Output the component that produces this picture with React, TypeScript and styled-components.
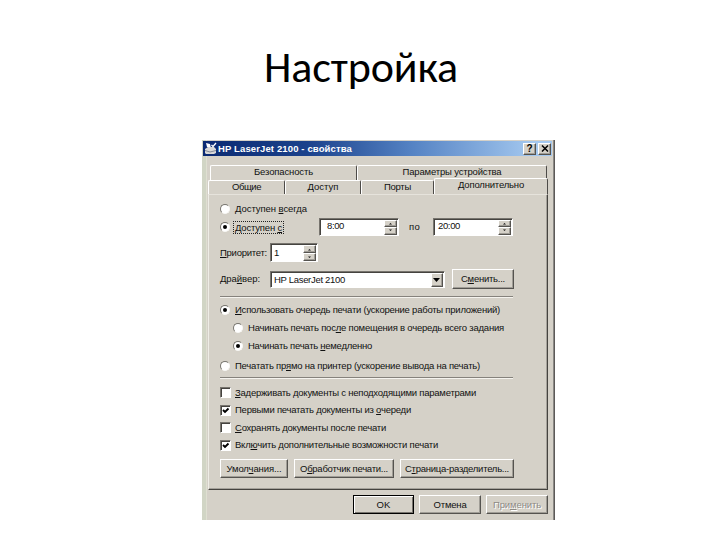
import React, { useLayoutEffect, useRef, useState } from "react"
import styled, { createGlobalStyle, css } from "styled-components"

const GlobalStyle = createGlobalStyle`
  * {
    box-sizing: border-box;
  }

  body {
    margin: 0;
    background: #fff;
    overflow: hidden;
  }
`

const raised = css`
  border: 1px solid;
  border-color: #fff #55534f #55534f #fff;
  box-shadow: inset -1px -1px 0 #a09d96;
`

const sunken = css`
  border: 1px solid;
  border-color: #77746e #fff #fff #77746e;
  box-shadow: inset 1px 1px 0 #45433f;
`

const Slide = styled.main`
  width: 720px;
  height: 540px;
  padding-top: 37px;
  background: #fff;
`

const Heading = styled.h1`
  display: flex;
  justify-content: center;
  height: 103px;
  margin: 0;
  padding-left: 2px;
  font: 400 44px/60px Carlito, "Open Sans", "Noto Sans", sans-serif;
  color: #000;
`

const Dialog = styled.section`
  width: 353px;
  height: 380px;
  margin-left: 202px;
  padding: 1px 0 0 1px;
  background: #d5d1c8;
  border-right: 1px solid #5c5a58;
  box-shadow: inset -1px 0 0 #8b8985, inset 4px 0 0 #d1d5c5, inset 5px 0 0 #dfdfd2;
  font: 9.5px/12px "Liberation Sans", Arial, sans-serif;
  color: #111;
`

const TitleBar = styled.header`
  display: flex;
  align-items: center;
  width: 349px;
  height: 15px;
  padding: 0 0 0 1px;
  background: linear-gradient(90deg, #0b2a72 0%, #1b428c 30%, #5583c4 60%, #a4c8ef 95%);
  color: #fff;
  font-weight: 700;
`

const TitleText = styled.div`
  flex: 1;
  padding-left: 1px;
`

const CaptionButton = styled.div`
  ${raised}
  display: flex;
  align-items: center;
  justify-content: center;
  width: 13px;
  height: 12px;
  margin-right: 1px;
  background: #d5d1c8;
  color: #000;
  font-size: 10px;
`

const Tabs = styled.nav`
  height: 29px;
  margin: 9px 0 0 5px;
  padding-left: 2px;
`

const TabRow = styled.div<{ $front?: boolean }>`
  display: flex;
  align-items: flex-end;
  width: ${(props) => (props.$front ? "340px" : "337px")};
  height: ${(props) => (props.$front ? "16px" : "15px")};
  margin-left: ${(props) => (props.$front ? "-2px" : "0")};
  margin-top: ${(props) => (props.$front ? "-2px" : "0")};
`

const Tab = styled.div<{ $width: number; $height?: number; $active?: boolean }>`
  display: flex;
  justify-content: center;
  width: ${(props) => props.$width}px;
  height: ${(props) => props.$height || 14}px;
  border-top: 1px solid #fff;
  border-left: 1px solid #fff;
  border-right: 1px solid #4d4b48;
  border-radius: 2px 2px 0 0;
  background: #d5d1c8;
`

const Panel = styled.div`
  display: flex;
  flex-direction: column;
  width: 340px;
  height: 296px;
  margin-left: 5px;
  padding: 5px 33px 0 11px;
  border: 1px solid;
  border-color: #e6e3dc #45433f #45433f #eeede6;
  box-shadow: inset -1px -1px 0 #a5a29b;
`

const Row = styled.div<{ $height: number; $top?: number; $indent?: number }>`
  display: flex;
  flex: none;
  align-items: center;
  height: ${(props) => props.$height}px;
  margin-top: ${(props) => props.$top || 0}px;
  padding-left: ${(props) => props.$indent || 0}px;
`

const Radio = styled.div`
  display: flex;
  align-items: center;
  justify-content: center;
  flex: none;
  width: 10px;
  height: 10px;
  margin-right: 5px;
  border: 1px solid;
  border-color: #77746e #f8f7f4 #f8f7f4 #77746e;
  border-radius: 50%;
  background: #fff;
`

const Dot = styled.div`
  width: 4px;
  height: 4px;
  border-radius: 50%;
  background: #000;
`

const Checkbox = styled.div`
  ${sunken}
  flex: none;
  width: 11px;
  height: 11px;
  margin-right: 4px;
  background: #fff;

  svg {
    display: block;
  }
`

const FocusRing = styled.div`
  height: 13px;
  margin-left: -2px;
  padding: 0 1px;
  border: 1px dotted #222;
  line-height: 11px;
`

const Field = styled.div<{ $width: number; $height: number; $pad?: number }>`
  ${sunken}
  display: flex;
  flex: none;
  align-items: center;
  width: ${(props) => props.$width}px;
  height: ${(props) => props.$height}px;
  padding: 1px 1px 0 ${(props) => props.$pad || 3}px;
  background: #fff;
`

const TimeField = styled(Field)`
  align-items: flex-start;
  margin-top: -1px;
`

const Spacer = styled.div<{ $width?: number }>`
  flex: ${(props) => (props.$width ? `0 0 ${props.$width}px` : "1")};
`

const Spin = styled.div`
  display: grid;
  grid-template-rows: 1fr 1fr;
  align-self: stretch;
  width: 13px;
`

const SpinButton = styled.div`
  ${raised}
  display: flex;
  align-items: center;
  justify-content: center;
  background: #d5d1c8;
`

const DropButton = styled(SpinButton)`
  align-self: stretch;
  width: 12px;
`

const Divider = styled.div<{ $top: number }>`
  flex: none;
  width: 293px;
  height: 2px;
  margin-top: ${(props) => props.$top}px;
  border-top: 1px solid #85827c;
  border-bottom: 1px solid #f5f3ee;
`

const Button = styled.div<{ $width: number; $height: number; $default?: boolean; $disabled?: boolean }>`
  ${raised}
  display: flex;
  flex: none;
  align-items: center;
  justify-content: center;
  width: ${(props) => props.$width}px;
  height: ${(props) => props.$height}px;
  background: #d5d1c8;

  ${(props) =>
    props.$default &&
    css`
      border-color: #000;
      box-shadow: inset 1px 1px 0 #fff, inset -1px -1px 0 #77746e;
    `}

  ${(props) =>
    props.$disabled &&
    css`
      color: #8d8a84;
      text-shadow: 1px 1px 0 #fff;
    `}
`

const ButtonRow = styled.div<{ $top: number }>`
  display: flex;
  flex: none;
  gap: 6px;
  margin-top: ${(props) => props.$top}px;
`

const Footer = styled.footer`
  display: flex;
  gap: 5px;
  margin: 5px 0 0 150px;
`

const CaptionText = styled.span`
  display: inline-block;
  white-space: nowrap;

  u {
    text-underline-offset: 1px;
    text-decoration-thickness: 1px;
  }
`

interface ICaption {
  width: number
  children: React.ReactNode
}

// spreads the letters so that the caption takes up exactly the given width
const Caption: React.FC<ICaption> = ({ width, children }) => {
  const ref = useRef<HTMLSpanElement>(null)
  const [spacing, setSpacing] = useState(0)

  useLayoutEffect(() => {
    const el = ref.current
    if (!el) return
    const count = (el.textContent || "").length
    el.style.letterSpacing = "0px"
    setSpacing((width - el.getBoundingClientRect().width) / count)
  }, [width])

  return (
    <CaptionText ref={ref} style={{ letterSpacing: `${spacing}px` }}>
      {children}
    </CaptionText>
  )
}

const PrinterIcon = () => (
  <svg width="13" height="13" viewBox="0 0 13 13">
    <path d="M2 1l4 1 1 4-4-1z" fill="#fff" />
    <path d="M1 7l3-2h6l2 2v4l-2 1H2l-1-1z" fill="#d8d8d8" />
    <path d="M1 8.500l5 1.500 6-1.500" fill="none" stroke="#6b7386" strokeWidth=".8" />
    <path d="M7.500 3l1.500 1.500L12 1" fill="none" stroke="#fff" strokeWidth="1.300" />
  </svg>
)

const Arrow: React.FC<{ up?: boolean }> = ({ up }) => (
  <svg width="5" height="3" viewBox="0 0 5 3">
    <path d={up ? "M1 2.500L2.500 1L4 2.500z" : "M1 .5h3L2.500 2z"} fill="#111" />
  </svg>
)

const SpinButtons = () => (
  <Spin>
    <SpinButton>
      <Arrow up />
    </SpinButton>
    <SpinButton>
      <Arrow />
    </SpinButton>
  </Spin>
)

const CheckMark: React.FC<{ checked?: boolean }> = ({ checked }) => (
  <Checkbox>
    {checked && (
      <svg width="9" height="9" viewBox="0 0 9 9">
        <path d="M2 4l2 2 3.500-3.500" fill="none" stroke="#000" strokeWidth="1.900" />
      </svg>
    )}
  </Checkbox>
)

const App = () => {
  return (
    <>
      <GlobalStyle />
      <Slide>
        <Heading>
          <Caption width={194}>Настройка</Caption>
        </Heading>
        <Dialog>
          <TitleBar>
            <PrinterIcon />
            <TitleText>
              <Caption width={134}>HP LaserJet 2100 - свойства</Caption>
            </TitleText>
            <CaptionButton>?</CaptionButton>
            <Spacer $width={1} />
            <CaptionButton>
              <svg width="8" height="7" viewBox="0 0 8 7">
                <path d="M1 .5l6 6M7 .5l-6 6" stroke="#000" strokeWidth="1.500" />
              </svg>
            </CaptionButton>
          </TitleBar>
          <Tabs>
            <TabRow>
              <Tab $width={147} $height={15}>
                <Caption width={59}>Безопасность</Caption>
              </Tab>
              <Tab $width={190} $height={15}>
                <Caption width={99}>Параметры устройства</Caption>
              </Tab>
            </TabRow>
            <TabRow $front>
              <Tab $width={77}>
                <Caption width={29}>Общие</Caption>
              </Tab>
              <Tab $width={76}>
                <Caption width={31}>Доступ</Caption>
              </Tab>
              <Tab $width={73}>
                <Caption width={27}>Порты</Caption>
              </Tab>
              <Tab $width={114} $height={16} $active>
                <Caption width={66}>Дополнительно</Caption>
              </Tab>
            </TabRow>
          </Tabs>
          <Panel>
            <Row $height={18}>
              <Radio />
              <Caption width={72}>
                Доступен <u>в</u>сегда
              </Caption>
            </Row>
            <Row $height={18}>
              <Radio>
                <Dot />
              </Radio>
              <FocusRing>
                <Caption width={47}>
                  <u>Д</u>оступен <u>с</u>
                </Caption>
              </FocusRing>
              <Spacer />
              <TimeField $width={80} $height={18} $pad={7}>
                <Caption width={17}>8:00</Caption>
                <Spacer />
                <SpinButtons />
              </TimeField>
              <Spacer $width={10} />
              <Caption width={11}>по</Caption>
              <Spacer $width={13} />
              <TimeField $width={80} $height={18} $pad={4}>
                <Caption width={22}>20:00</Caption>
                <Spacer />
                <SpinButtons />
              </TimeField>
              <Spacer $width={1} />
            </Row>
            <Row $height={19} $top={7}>
              <Caption width={47}>
                <u>П</u>риоритет:
              </Caption>
              <Spacer $width={3} />
              <Field $width={48} $height={19}>
                1
                <Spacer />
                <SpinButtons />
              </Field>
            </Row>
            <Row $height={20} $top={7}>
              <Caption width={40}>
                Дра<u>й</u>вер:
              </Caption>
              <Spacer $width={10} />
              <Field $width={175} $height={17}>
                <Caption width={71}>HP LaserJet 2100</Caption>
                <Spacer />
                <DropButton>
                  <svg width="7" height="4" viewBox="0 0 7 4">
                    <path d="M0 0h7L3.500 4z" fill="#000" />
                  </svg>
                </DropButton>
              </Field>
              <Spacer $width={7} />
              <Button $width={62} $height={20}>
                <Caption width={44}>
                  С<u>м</u>енить...
                </Caption>
              </Button>
            </Row>
            <Divider $top={7} />
            <Row $height={18} $top={3}>
              <Radio>
                <Dot />
              </Radio>
              <Caption width={265}>
                <u>И</u>спользовать очередь печати (ускорение работы приложений)
              </Caption>
            </Row>
            <Row $height={18} $indent={13}>
              <Radio />
              <Caption width={256}>
                Начинать печать пос<u>л</u>е помещения в очередь всего задания
              </Caption>
            </Row>
            <Row $height={18} $indent={13}>
              <Radio>
                <Dot />
              </Radio>
              <Caption width={124}>
                Начинать печать <u>н</u>емедленно
              </Caption>
            </Row>
            <Row $height={19} $top={1}>
              <Radio />
              <Caption width={245}>
                Печатать пр<u>я</u>мо на принтер (ускорение вывода на печать)
              </Caption>
            </Row>
            <Divider $top={2} />
            <Row $height={17.5} $top={5}>
              <CheckMark />
              <Caption width={241}>
                <u>З</u>адерживать документы с неподходящими параметрами
              </Caption>
            </Row>
            <Row $height={17.5}>
              <CheckMark checked />
              <Caption width={176}>
                Первыми печатать документы из <u>о</u>череди
              </Caption>
            </Row>
            <Row $height={17.5}>
              <CheckMark />
              <Caption width={151}>
                <u>С</u>охранять документы после печати
              </Caption>
            </Row>
            <Row $height={17.5}>
              <CheckMark checked />
              <Caption width={203}>
                Вкл<u>ю</u>чить дополнительные возможности печати
              </Caption>
            </Row>
            <ButtonRow $top={5}>
              <Button $width={68} $height={19}>
                <Caption width={55}>
                  Умол<u>ч</u>ания...
                </Caption>
              </Button>
              <Button $width={100} $height={19}>
                <Caption width={88}>
                  О<u>б</u>работчик печати...
                </Caption>
              </Button>
              <Button $width={114} $height={19}>
                <Caption width={104}>
                  С<u>т</u>раница-разделитель...
                </Caption>
              </Button>
            </ButtonRow>
          </Panel>
          <Footer>
            <Button $width={61} $height={19} $default>
              <Caption width={14}>OK</Caption>
            </Button>
            <Button $width={62} $height={19}>
              <Caption width={33}>Отмена</Caption>
            </Button>
            <Button $width={62} $height={19} $disabled>
              <Caption width={48}>
                При<u>м</u>енить
              </Caption>
            </Button>
          </Footer>
        </Dialog>
      </Slide>
    </>
  )
}

export default App
